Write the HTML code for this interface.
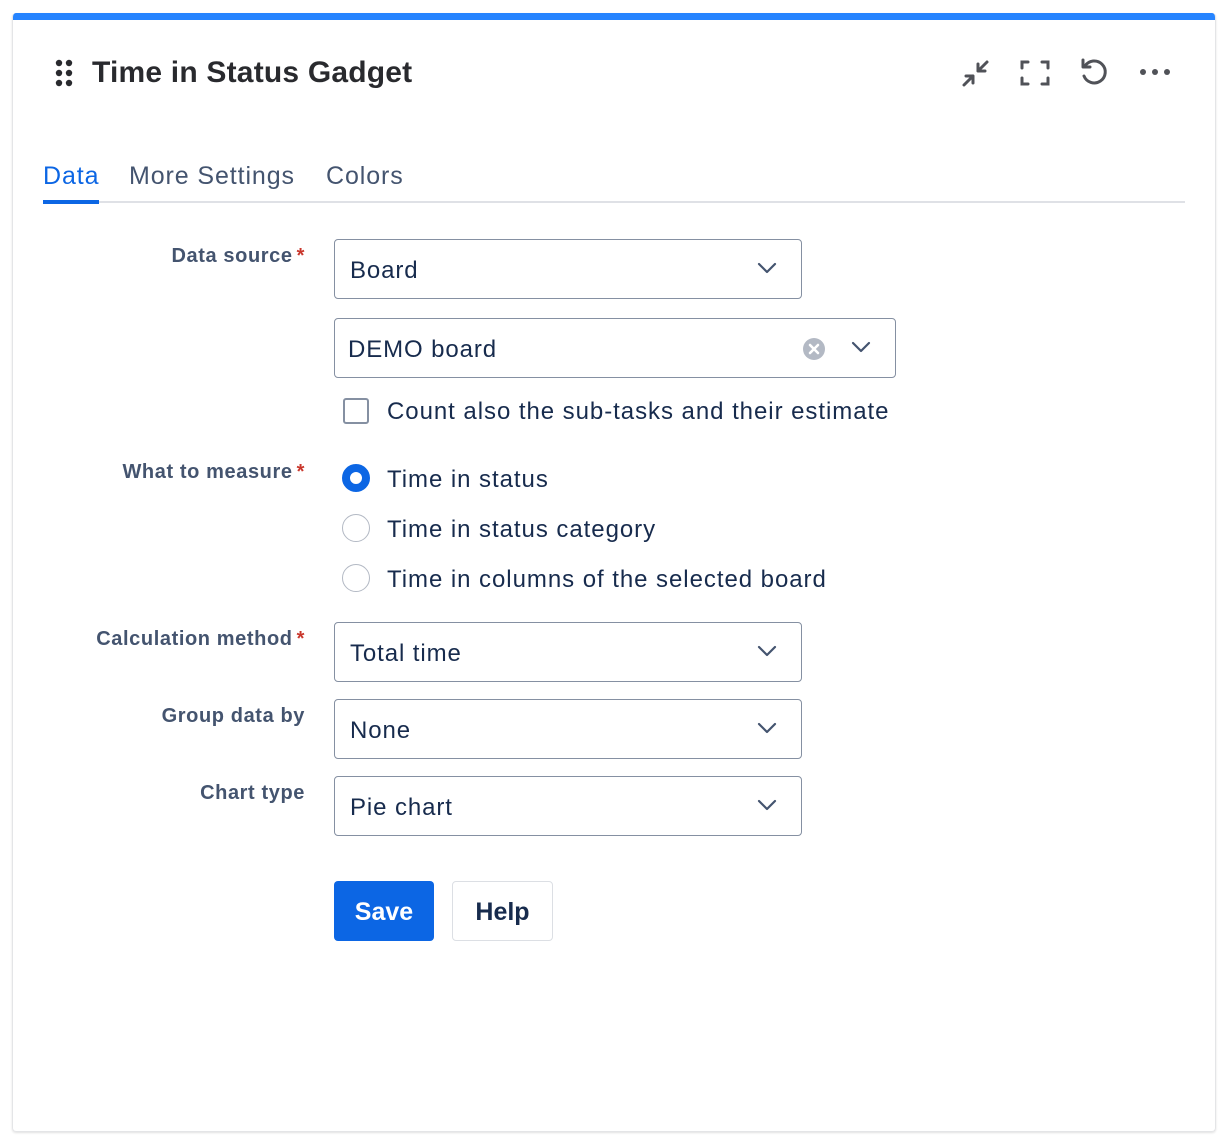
<!DOCTYPE html>
<html><head><meta charset="utf-8"><style>
*{box-sizing:border-box;margin:0;padding:0}
body{width:1232px;height:1147px;background:#fff;font-family:"Liberation Sans",sans-serif;position:relative;overflow:hidden;color:#172b4d}
.card{position:absolute;left:12px;top:13px;width:1204px;height:1119px;border:1px solid #e4e5e7;border-top:none;border-radius:4px;box-shadow:0 1px 2px rgba(0,0,0,.12);overflow:hidden}
.bar{position:absolute;left:0;top:0;right:0;height:7px;background:#2684ff}
.abs{position:absolute}
.title{left:92px;top:56px;font-size:30px;font-weight:bold;color:#292a2e;letter-spacing:0.2px}
.tab{top:162px;font-size:25px;color:#44546f;letter-spacing:0.9px}
.lbl{right:927px;font-size:20px;font-weight:bold;color:#44546f;text-align:right;white-space:nowrap;letter-spacing:0.6px}
.lbl b{color:#c9372c;margin-left:4px}
.sel{left:334px;width:468px;height:60px;border:1px solid #8590a2;border-radius:4px;font-size:24px;color:#172b4d;padding:0 0 0 15px;line-height:62px;letter-spacing:0.9px}
.chev{position:absolute;right:24px;top:21px}
.opt{left:387px;font-size:24px;color:#172b4d;letter-spacing:0.95px}
.radio{left:342px;width:28px;height:28px;border-radius:50%;border:1.5px solid #b3b9c4}
</style></head><body>
<div class="card">
<div class="bar"></div>
</div>
<svg class="abs" style="left:55px;top:59px" width="20" height="28" viewBox="0 0 20 28"><g fill="#292a2e"><circle cx="4" cy="4" r="3.2"/><circle cx="14" cy="4" r="3.2"/><circle cx="4" cy="14" r="3.2"/><circle cx="14" cy="14" r="3.2"/><circle cx="4" cy="24" r="3.2"/><circle cx="14" cy="24" r="3.2"/></g></svg>
<div class="abs title">Time in Status Gadget</div>
<svg class="abs" style="left:960px;top:58px" width="32" height="32" viewBox="0 0 32 32" fill="none" stroke="#505258" stroke-width="3" stroke-linecap="round" stroke-linejoin="round"><path d="M4 27 L13 18 M6 18 H13 V25"/><path d="M27 4 L18 13 M18 6 V13 H25"/></svg>
<svg class="abs" style="left:1019px;top:58px" width="32" height="30" viewBox="0 0 32 30" fill="none" stroke="#505258" stroke-width="3" stroke-linecap="round"><path d="M3 10V4h6M23 4h6v6M29 20v6h-6M9 26H3v-6"/></svg>
<svg class="abs" style="left:1078px;top:57px" width="34" height="32" viewBox="0 0 34 32" fill="none" stroke="#505258" stroke-width="3" stroke-linecap="round" stroke-linejoin="round"><path d="M7 9 A11 11 0 1 1 6 19"/><path d="M5 3 V10 H12"/></svg>
<svg class="abs" style="left:1138px;top:66px" width="36" height="12"><g fill="#505258"><circle cx="5" cy="6" r="3"/><circle cx="17" cy="6" r="3"/><circle cx="29" cy="6" r="3"/></g></svg>
<div class="abs tab" style="left:43px;color:#0c66e4">Data</div>
<div class="abs tab" style="left:129px">More Settings</div>
<div class="abs tab" style="left:326px">Colors</div>
<div class="abs" style="left:43px;top:201px;width:1142px;height:2px;background:#dfe1e6"></div>
<div class="abs" style="left:43px;top:200px;width:56px;height:4px;background:#0c66e4"></div>

<div class="abs lbl" style="top:245px">Data source<b>*</b></div>
<div class="abs sel" style="top:239px">Board<svg class="chev" width="20" height="14" viewBox="0 0 20 14" fill="none" stroke="#44546f" stroke-width="2.2" stroke-linecap="round" stroke-linejoin="round"><path d="M2 3l8 8 8-8"/></svg></div>
<div class="abs sel" style="top:318px;width:562px;padding-left:13px">DEMO board
<svg style="position:absolute;right:69px;top:18px" width="24" height="24" viewBox="0 0 24 24"><circle cx="12" cy="12" r="11" fill="#b3b9c4"/><path d="M8 8l8 8M16 8l-8 8" stroke="#fff" stroke-width="2.6" stroke-linecap="round"/></svg>
<svg class="chev" width="20" height="14" viewBox="0 0 20 14" fill="none" stroke="#44546f" stroke-width="2.2" stroke-linecap="round" stroke-linejoin="round"><path d="M2 3l8 8 8-8"/></svg></div>
<div class="abs" style="left:343px;top:398px;width:26px;height:26px;border:2px solid #8590a2;border-radius:3px"></div>
<div class="abs opt" style="top:398px">Count also the sub-tasks and their estimate</div>

<div class="abs lbl" style="top:461px">What to measure<b>*</b></div>
<div class="abs radio" style="top:464px;border:8px solid #0c66e4;background:#fff"></div>
<div class="abs opt" style="top:466px">Time in status</div>
<div class="abs radio" style="top:514px"></div>
<div class="abs opt" style="top:516px">Time in status category</div>
<div class="abs radio" style="top:564px"></div>
<div class="abs opt" style="top:566px">Time in columns of the selected board</div>

<div class="abs lbl" style="top:628px">Calculation method<b>*</b></div>
<div class="abs sel" style="top:622px">Total time<svg class="chev" width="20" height="14" viewBox="0 0 20 14" fill="none" stroke="#44546f" stroke-width="2.2" stroke-linecap="round" stroke-linejoin="round"><path d="M2 3l8 8 8-8"/></svg></div>
<div class="abs lbl" style="top:705px;right:927px">Group data by</div>
<div class="abs sel" style="top:699px">None<svg class="chev" width="20" height="14" viewBox="0 0 20 14" fill="none" stroke="#44546f" stroke-width="2.2" stroke-linecap="round" stroke-linejoin="round"><path d="M2 3l8 8 8-8"/></svg></div>
<div class="abs lbl" style="top:782px">Chart type</div>
<div class="abs sel" style="top:776px">Pie chart<svg class="chev" width="20" height="14" viewBox="0 0 20 14" fill="none" stroke="#44546f" stroke-width="2.2" stroke-linecap="round" stroke-linejoin="round"><path d="M2 3l8 8 8-8"/></svg></div>

<div class="abs" style="left:334px;top:881px;width:100px;height:60px;background:#0c66e4;border-radius:4px;color:#fff;font-size:25px;font-weight:bold;text-align:center;line-height:63px">Save</div>
<div class="abs" style="left:452px;top:881px;width:101px;height:60px;border:1px solid #dcdfe4;border-radius:4px;color:#172b4d;font-size:25px;font-weight:bold;text-align:center;line-height:61px">Help</div>
</body></html>
